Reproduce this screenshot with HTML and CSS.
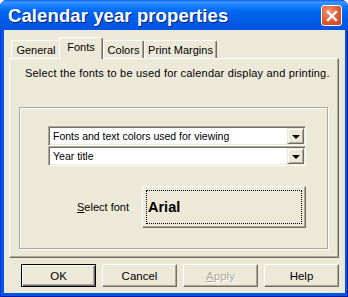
FILE: index.html
```html
<!DOCTYPE html>
<html lang="en">
<head>
    <meta charset="UTF-8">
    <title>Calendar year properties</title>
    <link rel="stylesheet" href="styles.css">
</head>
<body>
    <div class="window">
        <div class="titlebar">
            <span class="title">Calendar year properties</span>
            <button class="close" aria-label="Close">
                <svg width="12" height="12" viewBox="0 0 12 12">
                    <path d="M2 2 L10 10 M10 2 L2 10" stroke="#fff" stroke-width="2.4" stroke-linecap="square"/>
                </svg>
            </button>
        </div>

        <div class="client">
            <div class="tabs">
                <div class="tab tab-general">General</div>
                <div class="tab tab-fonts active">Fonts</div>
                <div class="tab tab-colors">Colors</div>
                <div class="tab tab-margins">Print Margins</div>
            </div>

            <div class="panel">
                <p class="hint">Select the fonts to be used for calendar display and printing.</p>

                <div class="group">
                    <div class="combo">
                        <span class="combo-text">Fonts and text colors used for viewing</span>
                        <span class="combo-arrow"></span>
                    </div>
                    <div class="combo">
                        <span class="combo-text">Year title</span>
                        <span class="combo-arrow"></span>
                    </div>

                    <div class="font-row">
                        <label class="font-label"><u>S</u>elect font</label>
                        <button class="font-btn"><span class="focus">Arial</span></button>
                    </div>
                </div>
            </div>

            <div class="buttons">
                <button class="btn default">OK</button>
                <button class="btn">Cancel</button>
                <button class="btn disabled"><u>A</u>pply</button>
                <button class="btn">Help</button>
            </div>
        </div>
    </div>
</body>
</html>
```

FILE: styles.css
```css
* {
    margin: 0;
    padding: 0;
    box-sizing: border-box;
}

body {
    width: 348px;
    height: 297px;
    background: #fff;
    font-family: 'Liberation Sans', Arial, sans-serif;
    font-size: 11px;
    color: #000;
}

.window {
    width: 348px;
    height: 297px;
    display: flex;
    flex-direction: column;
    border-radius: 7px 7px 0 0;
    background: #0055e5;
    box-shadow: inset 1px 0 #0831d9, inset -1px 0 #001ea0, inset 0 -1px #001ea0;
    overflow: hidden;
}

.titlebar {
    height: 30px;
    flex: none;
    display: flex;
    align-items: center;
    justify-content: space-between;
    padding: 0 6px 0 8px;
    background: linear-gradient(to bottom,
        #0a5ee6 0px, #3d95ff 2px, #2a89ff 4px, #1079fb 7px,
        #0066f0 12px, #005ee8 18px, #0058e4 24px, #0055e3 30px);
}

.title {
    color: #fff;
    font-weight: bold;
    font-size: 18.5px;
    letter-spacing: 0.1px;
    text-shadow: 1px 1px #0a1e80;
    margin-top: 1px;
}

.close {
    width: 21px;
    height: 21px;
    border: 1px solid #fff;
    border-radius: 3px;
    background: radial-gradient(circle at 35% 30%, #f29a78 0%, #e2623a 45%, #c4411b 100%);
    display: flex;
    align-items: center;
    justify-content: center;
    margin-top: 1px;
}

.client {
    flex: 1;
    margin: 0 3px 4px 4px;
    background: #ece9d8;
    padding: 7px 6px 6px 5px;
    display: flex;
    flex-direction: column;
}

/* tabs */
.tabs {
    display: flex;
    align-items: flex-end;
    margin-left: 2px;
    height: 21px;
}

.tab {
    height: 18px;
    border: 1px solid #fff;
    border-right-color: #716f64;
    border-bottom: none;
    border-radius: 2px 2px 0 0;
    box-shadow: inset -1px 0 #aca899;
    padding-top: 3px;
    text-align: center;
    background: #ece9d8;
}

.tab-general { width: 50px; }
.tab-colors { width: 41px; }
.tab-margins { width: 73px; }

.tab.active {
    width: 44px;
    height: 22px;
    margin-left: -2px;
    margin-bottom: -1px;
    position: relative;
    z-index: 1;
}

/* tab page */
.panel {
    height: 200px;
    border: 1px solid #fff;
    border-right-color: #716f64;
    border-bottom-color: #716f64;
    box-shadow: inset -1px -1px #aca899;
    padding: 8px 0 0 9px;
}

.hint {
    line-height: 13px;
    margin-left: 6px;
    letter-spacing: 0.2px;
}

.group {
    width: 309px;
    height: 142px;
    margin-top: 27px;
    border: 1px solid #aca899;
    box-shadow: 1px 1px 0 #fff, inset 1px 1px 0 #fff;
    padding: 18px 0 0 28px;
}

.combo {
    width: 258px;
    height: 20px;
    display: flex;
    align-items: center;
    justify-content: space-between;
    background: #fff;
    border: 1px solid;
    border-color: #aca899 #fff #fff #aca899;
    box-shadow: inset 1px 1px #716f64, inset -1px -1px #ece9d8;
    padding: 2px 1px 2px 4px;
}

.combo-text {
    font-size: 10.5px;
    line-height: 13px;
}

.combo-arrow {
    width: 17px;
    height: 16px;
    background: #ece9d8;
    border: 1px solid;
    border-color: #ece9d8 #716f64 #716f64 #ece9d8;
    box-shadow: inset 1px 1px #fff, inset -1px -1px #aca899;
    display: flex;
    align-items: center;
    justify-content: center;
}

.combo-arrow::after {
    content: '';
    border-left: 4px solid transparent;
    border-right: 4px solid transparent;
    border-top: 4px solid #000;
    margin-top: 1px;
}

.font-row {
    width: 258px;
    display: flex;
    align-items: center;
    justify-content: flex-end;
    gap: 13px;
    margin-top: 20px;
}

.font-label u {
    text-decoration: underline;
}

.font-btn {
    width: 164px;
    height: 42px;
    background: #ece9d8;
    border: 1px solid;
    border-color: #fff #716f64 #716f64 #fff;
    box-shadow: inset -1px -1px #aca899;
    padding: 3px;
    font-family: inherit;
}

.focus {
    display: flex;
    align-items: center;
    height: 100%;
    border: 1px dotted #000;
    padding-left: 1px;
    font-size: 14.5px;
    font-weight: bold;
}

/* dialog buttons */
.buttons {
    display: flex;
    justify-content: flex-end;
    gap: 6px;
    margin-top: 6px;
}

.btn {
    width: 75px;
    height: 23px;
    background: #ece9d8;
    border: 1px solid;
    border-color: #fff #716f64 #716f64 #fff;
    box-shadow: inset -1px -1px #aca899;
    font-family: inherit;
    font-size: 11.5px;
    color: #000;
}

.btn.default {
    border: 1px solid #000;
    box-shadow: inset 1px 1px #fff, inset -1px -1px #716f64, inset -2px -2px #aca899;
}

.btn.disabled {
    color: #aca899;
    text-shadow: 1px 1px #fff;
}
```
